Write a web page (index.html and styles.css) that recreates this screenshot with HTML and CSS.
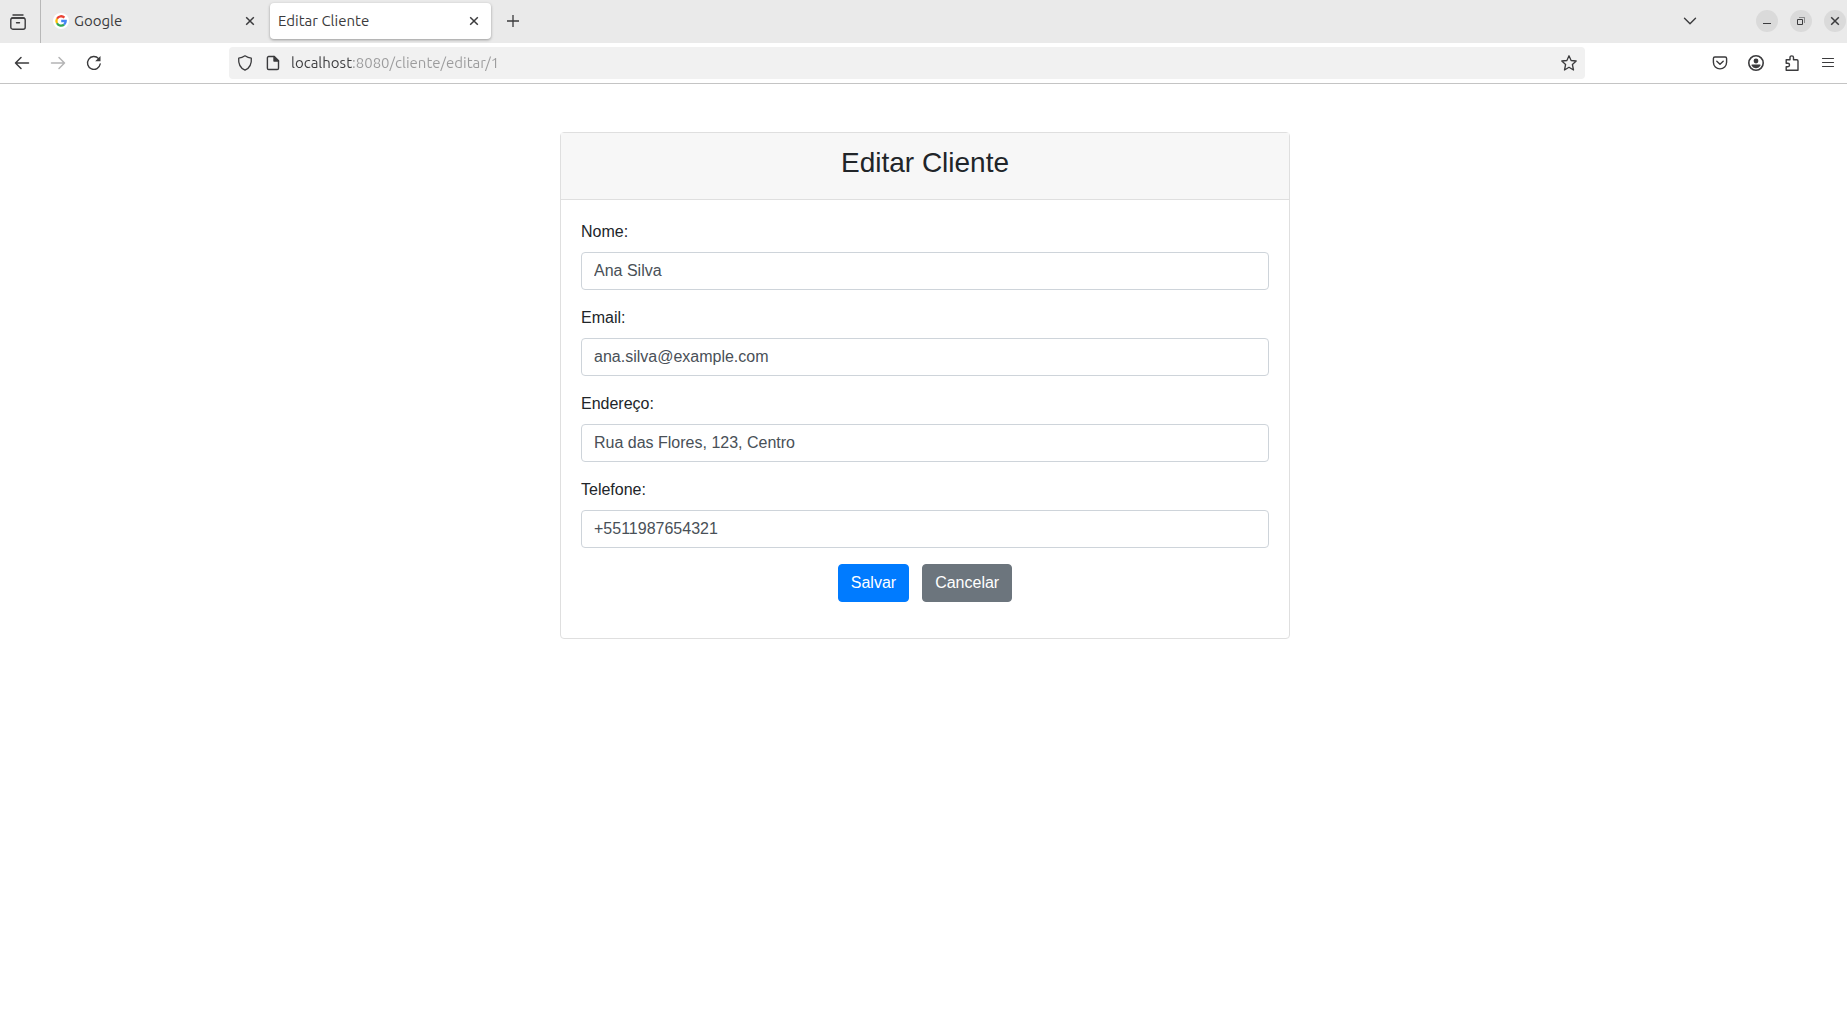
FILE: index.html
```html
<!DOCTYPE html>
<html lang="pt-BR">
<head>
<meta charset="utf-8">
<meta name="viewport" content="width=device-width, initial-scale=1">
<title>Editar Cliente</title>
<link rel="stylesheet" href="styles.css">
</head>
<body>
<header class="browser">
  <div class="tabstrip">
    <div class="tabview">
      <button class="icon-btn" type="button" aria-label="Firefox View">
        <svg width="16" height="16" viewBox="0 0 16 16" fill="none" stroke="currentColor" stroke-width="1.4" stroke-linecap="round"><path d="M3 1h10M1.9 4h12.200"/><rect x=".8" y="4" width="14.400" height="11.200" rx="2"/><path d="M6.500 8.700h3"/></svg>
      </button>
    </div>
    <div class="tab">
      <svg class="favicon" width="16" height="16" viewBox="0 0 16 16"><circle cx="8" cy="8" r="8" fill="#fff"/><g fill="none" stroke-width="2.300"><path stroke="#ea4335" d="M4 5.700A4.700 4.700 0 0 1 11.400 4.600"/><path stroke="#fbbc05" d="M4 10.300A4.700 4.700 0 0 1 4 5.700"/><path stroke="#34a853" d="M11.100 11.600A4.700 4.700 0 0 1 4 10.300"/><path stroke="#4285f4" d="M8.200 8H12.700A4.700 4.700 0 0 1 11.100 11.600"/></g></svg>
      <span class="tab-title">Google</span>
      <button class="icon-btn" type="button" aria-label="Fechar aba Google"><svg width="10" height="10" viewBox="0 0 10 10" fill="none" stroke="currentColor" stroke-width="1.500"><path d="M1.200 1.200l7.600 7.600M8.800 1.200L1.200 8.800"/></svg></button>
    </div>
    <div class="tab tab-active">
      <span class="tab-title">Editar Cliente</span>
      <button class="icon-btn" type="button" aria-label="Fechar aba Editar Cliente"><svg width="10" height="10" viewBox="0 0 10 10" fill="none" stroke="currentColor" stroke-width="1.500"><path d="M1.200 1.200l7.600 7.600M8.800 1.200L1.200 8.800"/></svg></button>
    </div>
    <button class="icon-btn new-tab" type="button" aria-label="Nova aba"><svg width="12" height="12" viewBox="0 0 12 12" fill="none" stroke="currentColor" stroke-width="1.300"><path d="M6 0v12M0 6h12"/></svg></button>
    <button class="icon-btn all-tabs" type="button" aria-label="Listar abas"><svg width="14" height="8" viewBox="0 0 14 8" fill="none" stroke="currentColor" stroke-width="1.400" stroke-linecap="round" stroke-linejoin="round"><path d="M1.500 1.200L7 6.700l5.500-5.500"/></svg></button>
    <div class="window-buttons">
      <button class="window-btn" type="button" aria-label="Minimizar"><svg width="10" height="10" viewBox="0 0 10 10" fill="none" stroke="currentColor"><path d="M1 7.500h8"/></svg></button>
      <button class="window-btn" type="button" aria-label="Restaurar"><svg width="10" height="10" viewBox="0 0 10 10" fill="none" stroke="currentColor"><path d="M1.500 3.500h5v5h-5z"/><path d="M3 1.500h5.500V7" opacity=".5"/></svg></button>
      <button class="window-btn" type="button" aria-label="Fechar"><svg width="10" height="10" viewBox="0 0 10 10" fill="none" stroke="currentColor" stroke-width="1.500"><path d="M1.200 1.200l7.600 7.600M8.800 1.200L1.200 8.800"/></svg></button>
    </div>
  </div>
  <div class="toolbar">
    <nav class="nav-buttons">
      <button class="icon-btn" type="button" aria-label="Voltar"><svg width="16" height="16" viewBox="0 0 16 16" fill="none" stroke="currentColor" stroke-width="1.500" stroke-linecap="round" stroke-linejoin="round"><path d="M14.500 8h-13M7 2.500L1.500 8 7 13.500"/></svg></button>
      <button class="icon-btn" type="button" aria-label="Avançar" disabled><svg width="16" height="16" viewBox="0 0 16 16" fill="none" stroke="currentColor" stroke-width="1.500" stroke-linecap="round" stroke-linejoin="round"><path d="M1.500 8h13M9 2.500L14.500 8 9 13.500"/></svg></button>
      <button class="icon-btn" type="button" aria-label="Recarregar"><svg width="16" height="16" viewBox="0 0 16 16" fill="none" stroke="currentColor" stroke-width="1.400" stroke-linecap="round"><path d="M14.200 9A6.400 6.400 0 1 1 12.600 3.600"/><path d="M14.500 1v5.300H9.200z" fill="currentColor" stroke="none"/></svg></button>
    </nav>
    <div class="urlbar">
      <svg width="16" height="16" viewBox="0 0 16 16" fill="none" stroke="currentColor" stroke-width="1.300" stroke-linejoin="round"><path d="M8 .8C6 2.200 4 3 1.700 3.200 1.200 8.500 3 12.800 8 15.200c5-2.400 6.800-6.700 6.300-12C12 3 10 2.200 8 .8z"/></svg>
      <svg width="16" height="16" viewBox="0 0 16 16" fill="none" stroke="currentColor" stroke-width="1.400" stroke-linejoin="round"><path d="M3.700 1.500h5.500l4.300 4.300v7.400a1.300 1.300 0 0 1-1.300 1.300H3.700a1.300 1.300 0 0 1-1.300-1.300V2.800a1.300 1.300 0 0 1 1.300-1.300z"/><path d="M9 1.500V6h4.500z" fill="currentColor"/></svg>
      <input class="url-input" type="text" aria-label="Endereço da página" value="localhost:8080/cliente/editar/1">
      <button class="icon-btn" type="button" aria-label="Adicionar aos favoritos"><svg width="16" height="16" viewBox="0 0 16 16" fill="none" stroke="currentColor" stroke-width="1.300" stroke-linejoin="round"><path d="M8 .8l2.100 4.700 5.100.5-3.800 3.500 1.100 5.500L8 12.300 3.500 15l1.100-5.500L.8 6l5.100-.5z"/></svg></button>
    </div>
    <div class="actions">
      <button class="icon-btn" type="button" aria-label="Salvar no Pocket"><svg width="16" height="16" viewBox="0 0 16 16" fill="none" stroke="currentColor" stroke-width="1.400" stroke-linecap="round" stroke-linejoin="round"><path d="M2.900 2h10.200a1.500 1.500 0 0 1 1.500 1.500v3.800a6.600 6.600 0 0 1-13.200 0V3.500A1.500 1.500 0 0 1 2.900 2z"/><path d="M4.800 6.200L8 9.200l3.200-3"/></svg></button>
      <button class="icon-btn" type="button" aria-label="Conta"><svg width="16" height="16" viewBox="0 0 16 16"><circle cx="8" cy="8" r="7.200" fill="none" stroke="currentColor" stroke-width="1.600"/><circle cx="8" cy="6" r="2.400" fill="currentColor"/><path d="M4.300 9.600h7.400c.7 0 1 .5.800 1A4.800 4.800 0 0 1 8 13.200a4.800 4.800 0 0 1-4.500-2.600c-.2-.5.100-1 .8-1z" fill="currentColor"/></svg></button>
      <button class="icon-btn" type="button" aria-label="Extensões"><svg width="16" height="16" viewBox="0 0 16 16" fill="none" stroke="currentColor" stroke-width="1.400" stroke-linejoin="round"><path d="M2.200 4.800H6V2.600a1.700 1.700 0 0 1 3.500 0v2.200h3.300a1.200 1.200 0 0 1 1.200 1.200v9.200H2.200v-3.400h1.600a1.700 1.700 0 0 0 0-3.500H2.200z"/></svg></button>
      <button class="icon-btn" type="button" aria-label="Menu"><svg width="14" height="12" viewBox="0 0 14 12" fill="none" stroke="currentColor" stroke-width="1.200" stroke-linecap="round"><path d="M1.500 1.500h11M1.500 5.500h11M1.500 9.500h11"/></svg></button>
    </div>
  </div>
</header>
<main class="page">
  <section class="card">
    <div class="card-header"><h1 class="card-title">Editar Cliente</h1></div>
    <form class="card-body">
      <div class="field"><label for="nome">Nome:</label><input class="form-control" id="nome" type="text" value="Ana Silva"></div>
      <div class="field"><label for="email">Email:</label><input class="form-control" id="email" type="email" value="ana.silva@example.com"></div>
      <div class="field"><label for="endereco">Endereço:</label><input class="form-control" id="endereco" type="text" value="Rua das Flores, 123, Centro"></div>
      <div class="field"><label for="telefone">Telefone:</label><input class="form-control" id="telefone" type="text" value="+5511987654321"></div>
      <div class="form-actions">
        <button class="btn btn-primary" type="submit">Salvar</button>
        <a class="btn btn-secondary" href="#">Cancelar</a>
      </div>
    </form>
  </section>
</main>
</body>
</html>
```
FILE: styles.css
```css
*, *::before, *::after { box-sizing: border-box; }

body {
  margin: 0;
  background: #fff;
  color: #212529;
  font: 16px/24px "Liberation Sans", Arial, sans-serif;
}

button, input { font: inherit; color: inherit; }

svg { display: block; flex: none; }

/* Browser chrome */
.browser {
  border-bottom: 1px solid #c4c4c4;
  color: #3b3b3d;
  font-family: Ubuntu, "Open Sans", sans-serif;
  font-size: 15px;
}

.tabstrip {
  display: flex;
  align-items: center;
  height: 43px;
  padding-bottom: 1px;
  background: #eaeaea;
}

.icon-btn {
  display: grid;
  place-items: center;
  flex: none;
  width: 36px;
  height: 32px;
  padding: 0;
  border: 0;
  background: none;
}

.icon-btn:disabled { color: #b4b4b5; }

.tabview {
  display: flex;
  align-items: center;
  align-self: stretch;
  width: 41px;
  margin-bottom: -1px;
  border-right: 1px solid #b8b8b8;
}

.tab {
  display: flex;
  align-items: center;
  gap: 5px;
  flex: 0 1 226px;
  height: 36px;
  margin-right: 3px;
  padding-left: 12px;
  border-radius: 4px;
  line-height: 20px;
}

.tab-active {
  flex-basis: 221px;
  margin-right: 4px;
  padding-left: 8px;
  background: #fff;
  box-shadow: 0 1px 3px rgba(0, 0, 0, .35);
}

.tab-title { flex: 1; white-space: nowrap; }

.tab .icon-btn { width: 34px; }

.all-tabs { margin-left: auto; }

.window-buttons {
  display: flex;
  gap: 12px;
  margin-left: 48px;
  padding-right: 1px;
}

.window-btn {
  display: grid;
  place-items: center;
  width: 22px;
  height: 22px;
  padding: 0;
  border: 0;
  border-radius: 50%;
  background: #dadada;
}

.toolbar {
  display: flex;
  align-items: center;
  height: 40px;
}

.nav-buttons, .actions { display: flex; }

.nav-buttons { padding-left: 4px; }

.urlbar {
  display: flex;
  align-items: center;
  gap: 12px;
  flex: 1;
  height: 32px;
  margin: 0 117px;
  padding-left: 8px;
  border-radius: 4px;
  background: #f1f1f1;
}

.urlbar .icon-btn { width: 32px; }

/* Host name is dark, the rest of the address is dimmed */
.url-input {
  flex: 1;
  min-width: 0;
  height: 32px;
  margin-left: -2px;
  padding: 0 0 2px;
  border: 0;
  outline: 0;
  color: transparent;
  background: linear-gradient(to right, #3b3b3d 61px, #9b9b9c 61px);
  -webkit-background-clip: text;
  background-clip: text;
}

.actions { padding-right: 1px; }

/* Page */
.page { padding: 48px 16px 48px 19px; }

.card {
  max-width: 730px;
  margin: 0 auto;
  border: 1px solid #dfdfdf;
  border-radius: 4px;
  background: #fff;
}

.card-header {
  padding: 12px 20px 18px;
  border-bottom: 1px solid #dfdfdf;
  background: #f7f7f7;
  text-align: center;
}

.card-title {
  margin: 0;
  font-size: 28px;
  line-height: 36px;
  font-weight: 500;
}

.card-body { padding: 20px 20px 36px; }

.field { margin-bottom: 16px; }

.field label {
  display: block;
  margin-bottom: 8px;
}

.form-control {
  display: block;
  width: 100%;
  height: 38px;
  padding: 6px 12px;
  border: 1px solid #ced4da;
  border-radius: 4px;
  background: #fff;
  color: #495057;
}

.form-actions {
  display: flex;
  justify-content: center;
  gap: 13px;
}

.btn {
  padding: 6px 12px;
  border: 1px solid transparent;
  border-radius: 4px;
  color: #fff;
  line-height: 24px;
  text-decoration: none;
}

.btn-primary { background-color: #007bff; border-color: #007bff; }

.btn-secondary { background-color: #6c757d; border-color: #6c757d; }
```
